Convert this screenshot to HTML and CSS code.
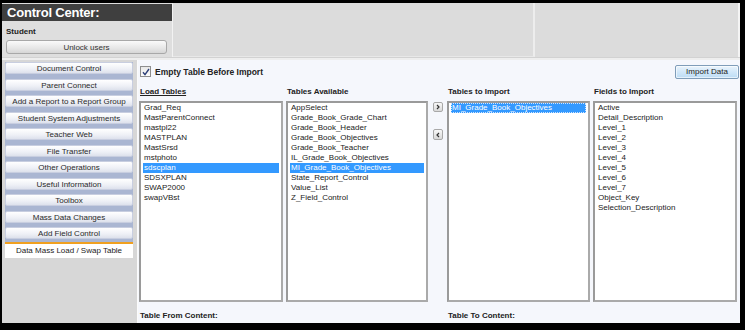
FILE: index.html
```html
<!DOCTYPE html>
<html lang="en">
<head>
    <meta charset="UTF-8" />
    <title>Control Center</title>
    <link rel="stylesheet" href="styles.css">
</head>
<body>
<div class="frame">
    <div class="top">
        <div class="cc-panel">
            <div class="cc-title">Control Center:</div>
            <div class="cc-body">
                <div class="cc-label">Student</div>
                <button class="btn-plain" type="button">Unlock users</button>
            </div>
        </div>
        <div class="top-mid"></div>
        <div class="top-right"></div>
    </div>
    <div class="top-sep"></div>
    <div class="main">
        <div class="sidebar">
            <div class="nav">
                <div class="nav-btn">Document Control</div>
                <div class="nav-btn">Parent Connect</div>
                <div class="nav-btn">Add a Report to a Report Group</div>
                <div class="nav-btn">Student System Adjustments</div>
                <div class="nav-btn">Teacher Web</div>
                <div class="nav-btn">File Transfer</div>
                <div class="nav-btn">Other Operations</div>
                <div class="nav-btn">Useful Information</div>
                <div class="nav-btn">Toolbox</div>
                <div class="nav-btn">Mass Data Changes</div>
                <div class="nav-btn">Add Field Control</div>
            </div>
            <div class="nav-tab">Data Mass Load / Swap Table</div>
        </div>
        <div class="content">
            <div class="tool-row">
                <label class="check">
                    <span class="check-box">
                        <svg width="8" height="8" viewBox="0 0 8 8"><polyline points="1,4.2 3,6.6 7,1" fill="none" stroke="#2c3f78" stroke-width="1.4"/></svg>
                    </span>
                    Empty Table Before Import
                </label>
                <button class="btn-import" type="button">Import Data</button>
            </div>
            <div class="grid">
                <div class="col-head underline">Load Tables</div>
                <div class="col-head">Tables Available</div>
                <div></div>
                <div class="col-head">Tables to Import</div>
                <div class="col-head">Fields to Import</div>

                <div class="list">
                    <div class="item">Grad_Req</div>
                    <div class="item">MastParentConnect</div>
                    <div class="item">mastpl22</div>
                    <div class="item">MASTPLAN</div>
                    <div class="item">MastSrsd</div>
                    <div class="item">mstphoto</div>
                    <div class="item selected">sdscplan</div>
                    <div class="item">SDSXPLAN</div>
                    <div class="item">SWAP2000</div>
                    <div class="item">swapVBst</div>
                </div>
                <div class="list">
                    <div class="item">AppSelect</div>
                    <div class="item">Grade_Book_Grade_Chart</div>
                    <div class="item">Grade_Book_Header</div>
                    <div class="item">Grade_Book_Objectives</div>
                    <div class="item">Grade_Book_Teacher</div>
                    <div class="item">IL_Grade_Book_Objectives</div>
                    <div class="item selected">MI_Grade_Book_Objectives</div>
                    <div class="item">State_Report_Control</div>
                    <div class="item">Value_List</div>
                    <div class="item">Z_Field_Control</div>
                </div>
                <div class="arrows">
                    <button class="arrow" type="button">
                        <svg width="6" height="6" viewBox="0 0 6 6"><polyline points="2,1 4,3 2,5" fill="none" stroke="#333" stroke-width="1.2"/></svg>
                    </button>
                    <button class="arrow arrow-back" type="button">
                        <svg width="6" height="6" viewBox="0 0 6 6"><polyline points="4,1 2,3 4,5" fill="none" stroke="#333" stroke-width="1.2"/></svg>
                    </button>
                </div>
                <div class="list">
                    <div class="item selected focused">MI_Grade_Book_Objectives</div>
                </div>
                <div class="list">
                    <div class="item">Active</div>
                    <div class="item">Detail_Description</div>
                    <div class="item">Level_1</div>
                    <div class="item">Level_2</div>
                    <div class="item">Level_3</div>
                    <div class="item">Level_4</div>
                    <div class="item">Level_5</div>
                    <div class="item">Level_6</div>
                    <div class="item">Level_7</div>
                    <div class="item">Object_Key</div>
                    <div class="item">Selection_Description</div>
                </div>

                <div class="foot-label">Table From Content:</div>
                <div></div>
                <div></div>
                <div class="foot-label">Table To Content:</div>
                <div></div>
            </div>
        </div>
    </div>
</div>
</body>
</html>
```

FILE: styles.css
```css
* {
    box-sizing: border-box;
}

body {
    margin: 0;
    background: #000;
    font-family: 'Liberation Sans', Arial, sans-serif;
    font-size: 8px;
    color: #222;
}

.frame {
    margin: 3px 0 0 2px;
    width: 738px;
    height: 320px;
    background: #dcdcdc;
    display: flex;
    flex-direction: column;
    overflow: hidden;
}

/* Top header strip */
.top {
    height: 54px;
    display: flex;
}

.cc-panel {
    width: 171px;
    background: #dedede;
    border-right: 1px solid #f2f2f2;
}

.cc-title {
    height: 17px;
    margin-top: 1px;
    background: #3f3f3f;
    color: #fff;
    font-size: 13px;
    font-weight: 700;
    line-height: 17px;
    padding-left: 5px;
    letter-spacing: -0.2px;
}

.cc-body {
    padding: 6px 4px 0 4px;
}

.cc-label {
    font-weight: 700;
    line-height: 10px;
    margin-bottom: 3px;
}

.btn-plain {
    display: block;
    width: 161px;
    height: 14px;
    padding: 0;
    font-family: inherit;
    font-size: 8px;
    color: #333;
    border: 1px solid #a8a8a8;
    border-radius: 3px;
    background: linear-gradient(#fafafa, #e6e6e6 60%, #d6d6d6);
}

.top-mid {
    width: 362px;
    background: #dcdcdc;
    border-right: 2px solid #ededed;
    border-bottom: 1px solid #e8e8e8;
}

.top-right {
    flex: 1;
    background: #dcdcdc;
    border-right: 2px solid #f4f4f4;
}

.top-sep {
    height: 3px;
    background: #eeeeee;
    border-top: 1px solid #d2d2d2;
}

/* Main area */
.main {
    flex: 1;
    display: flex;
    min-height: 0;
}

.sidebar {
    width: 136px;
    padding: 2.3px 4px 0 3px;
    background: #d7d7d7;
    border-right: 1px solid #fbfbfb;
}

.nav {
    background: #aab6d2;
    padding-bottom: 3.2px;
}

.nav-btn {
    height: 12px;
    margin-bottom: 4.5px;
    line-height: 12px;
    text-align: center;
    color: #2a2a2a;
    background: linear-gradient(#ffffff, #eef0f6 60%, #dde1ec);
    border: 1px solid #c8cee0;
    border-radius: 2px;
    white-space: nowrap;
}

.nav-btn:last-child {
    margin-bottom: 0;
}

.nav-tab {
    border-top: 2px solid #f0a020;
    background: #fff;
    height: 15.5px;
    padding-top: 1px;
    line-height: 12px;
    text-align: center;
    color: #222;
}

.content {
    flex: 1;
    background: #f5f7fc;
    padding: 0 3px 0 1px;
}

.tool-row {
    height: 14px;
    margin-top: 4.5px;
    display: flex;
    justify-content: space-between;
    align-items: center;
    padding-left: 1px;
}

.check {
    display: flex;
    align-items: center;
    gap: 4px;
    font-weight: 700;
    font-size: 8.5px;
    color: #222;
}

.check-box {
    width: 11px;
    height: 11px;
    border: 1px solid #8e8e8e;
    background: linear-gradient(#e8e8e8, #fdfdfd);
    display: flex;
    align-items: center;
    justify-content: center;
}

.btn-import {
    width: 64px;
    height: 14px;
    padding: 0;
    margin-right: -2px;
    font-family: inherit;
    font-size: 8px;
    color: #222;
    border: 1px solid #7f9db9;
    border-radius: 2px;
    background: linear-gradient(#eaf4fc, #cfe6f8 55%, #bcdcf4);
    box-shadow: inset 0 0 0 1px rgba(255, 255, 255, 0.6);
}

.grid {
    margin-top: 8.5px;
    display: grid;
    grid-template-columns: 144px 142px 13px 143px 144px;
    grid-template-rows: 14px 201px auto;
    column-gap: 3px;
}

.col-head {
    font-weight: 700;
    line-height: 10px;
    padding-left: 1px;
    color: #222;
}

.underline {
    text-decoration: underline;
}

.list {
    background: #fff;
    border: 2px solid #aaa;
    border-top-color: #9a9a9a;
    border-left-color: #9a9a9a;
    padding: 0 2px;
}

.item {
    height: 10px;
    line-height: 10px;
    padding-left: 1px;
    color: #222;
    white-space: nowrap;
}

.selected {
    background: #3399ff;
    color: #fff;
}

.focused {
    outline: 1px dotted #cfe4ff;
    outline-offset: -1px;
}

.arrows {
    display: flex;
    flex-direction: column;
    align-items: center;
    padding-top: 1px;
}

.arrow {
    width: 10px;
    height: 10px;
    padding: 0;
    border: 1px solid #a8a8a8;
    border-radius: 2px;
    background: linear-gradient(#f8f8f8, #d9d9d9);
    display: flex;
    align-items: center;
    justify-content: center;
}

.arrow-back {
    margin-top: 17px;
    height: 11px;
}

.foot-label {
    margin-top: 9px;
    line-height: 10px;
    font-weight: 700;
    padding-left: 1px;
    color: #222;
}
```
